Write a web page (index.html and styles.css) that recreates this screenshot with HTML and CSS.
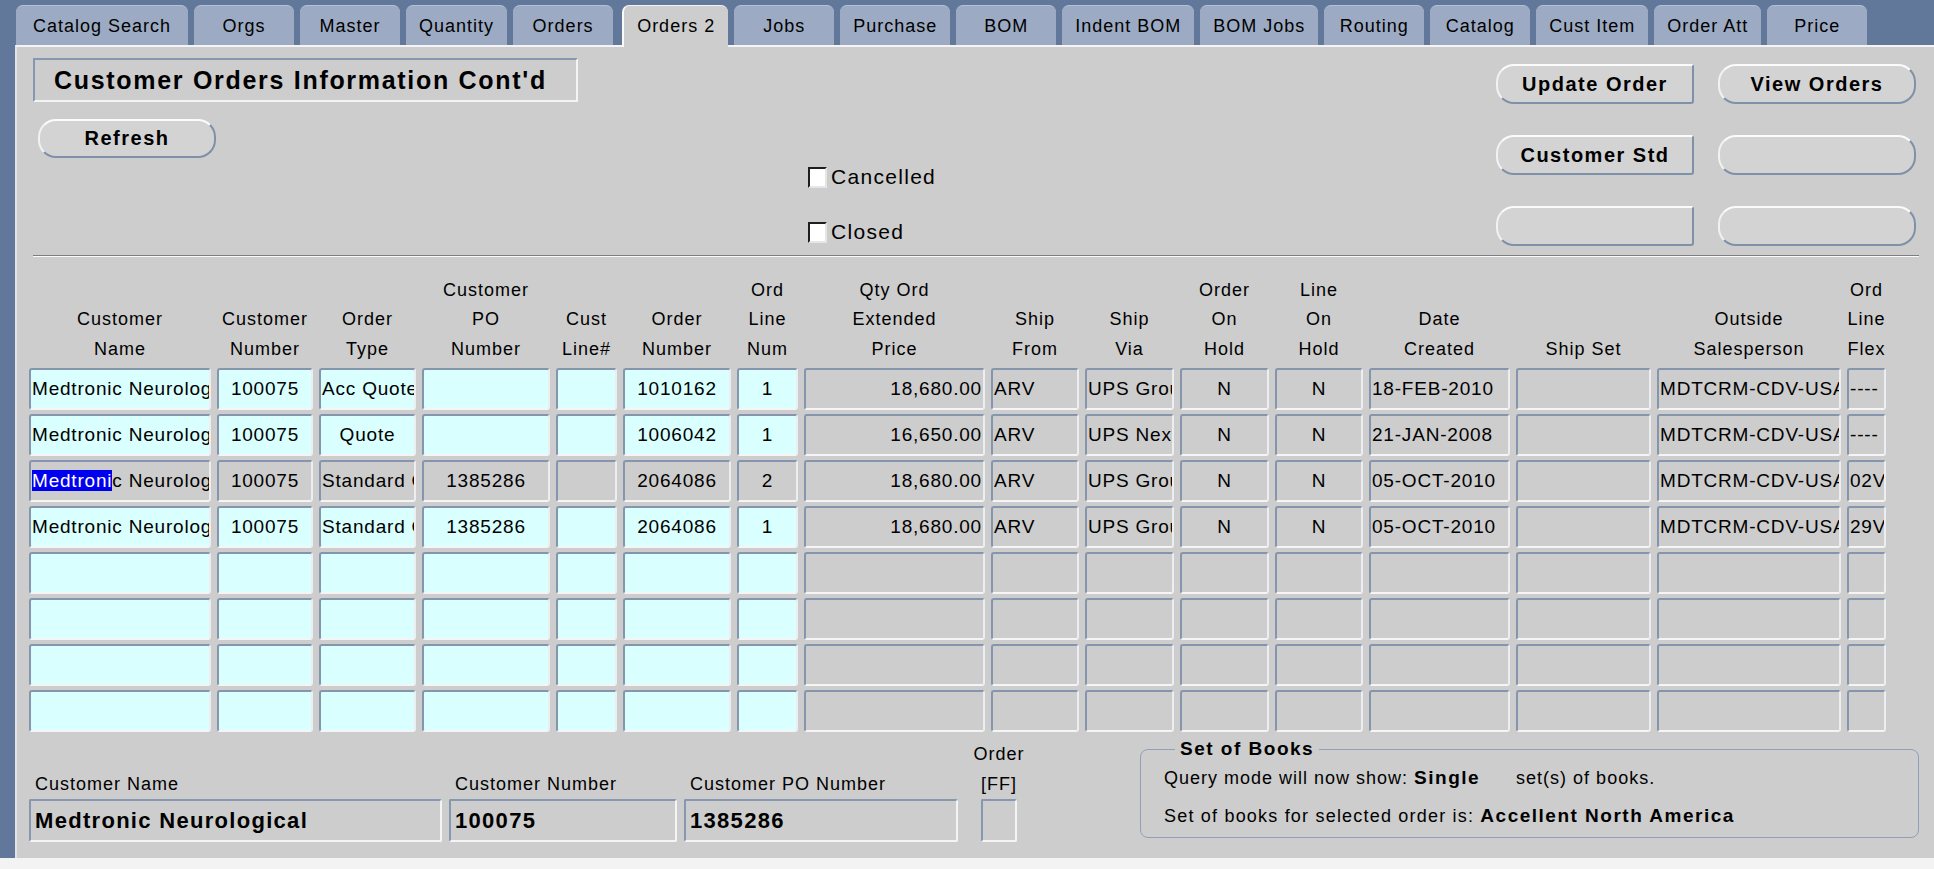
FILE: index.html
```html
<!DOCTYPE html>
<html lang="en">
  <head>
    <meta charset="UTF-8" />
    <meta name="viewport" content="width=device-width, initial-scale=1.0" />
    <title>Customer Orders Information Cont'd</title>
    <link rel="stylesheet" href="styles.css">
  </head>
  <body>
    <div class="app">
      <nav class="tabs">
        <div class="tab">Catalog Search</div>
        <div class="tab">Orgs</div>
        <div class="tab">Master</div>
        <div class="tab">Quantity</div>
        <div class="tab">Orders</div>
        <div class="tab active">Orders 2</div>
        <div class="tab">Jobs</div>
        <div class="tab">Purchase</div>
        <div class="tab">BOM</div>
        <div class="tab">Indent BOM</div>
        <div class="tab">BOM Jobs</div>
        <div class="tab">Routing</div>
        <div class="tab">Catalog</div>
        <div class="tab">Cust Item</div>
        <div class="tab">Order Att</div>
        <div class="tab">Price</div>
      </nav>

      <div class="panel">
        <div class="top">
          <div class="left">
            <div class="title">Customer Orders Information Cont'd</div>
            <button class="btn refresh">Refresh</button>
          </div>
          <div class="checks">
            <label class="check"><span class="box"></span>Cancelled</label>
            <label class="check"><span class="box"></span>Closed</label>
          </div>
          <div class="actions">
            <button class="btn sq">Update Order</button>
            <button class="btn">View Orders</button>
            <button class="btn sq">Customer Std</button>
            <button class="btn"></button>
            <button class="btn sq"></button>
            <button class="btn"></button>
          </div>
        </div>

        <div class="sep"></div>

        <div class="grid">
          <!-- header -->
          <div class="hd"><div>Customer<br>Name</div></div>
          <div class="hd"><div>Customer<br>Number</div></div>
          <div class="hd"><div>Order<br>Type</div></div>
          <div class="hd"><div>Customer<br>PO<br>Number</div></div>
          <div class="hd"><div>Cust<br>Line#</div></div>
          <div class="hd"><div>Order<br>Number</div></div>
          <div class="hd"><div>Ord<br>Line<br>Num</div></div>
          <div class="hd"><div>Qty Ord<br>Extended<br>Price</div></div>
          <div class="hd"><div>Ship<br>From</div></div>
          <div class="hd"><div>Ship<br>Via</div></div>
          <div class="hd"><div>Order<br>On<br>Hold</div></div>
          <div class="hd"><div>Line<br>On<br>Hold</div></div>
          <div class="hd"><div>Date<br>Created</div></div>
          <div class="hd"><div>Ship Set</div></div>
          <div class="hd"><div>Outside<br>Salesperson</div></div>
          <div class="hd"><div>Ord<br>Line<br>Flex</div></div>

          <!-- row 1 -->
          <div class="cell c l">Medtronic Neurological</div>
          <div class="cell c">100075</div>
          <div class="cell c l">Acc Quote</div>
          <div class="cell c"></div>
          <div class="cell c"></div>
          <div class="cell c">1010162</div>
          <div class="cell c">1</div>
          <div class="cell g r">18,680.00</div>
          <div class="cell g l">ARV</div>
          <div class="cell g l">UPS Ground</div>
          <div class="cell g">N</div>
          <div class="cell g">N</div>
          <div class="cell g l">18-FEB-2010</div>
          <div class="cell g"></div>
          <div class="cell g l">MDTCRM-CDV-USA</div>
          <div class="cell g l">----</div>

          <!-- row 2 -->
          <div class="cell c l">Medtronic Neurological</div>
          <div class="cell c">100075</div>
          <div class="cell c">Quote</div>
          <div class="cell c"></div>
          <div class="cell c"></div>
          <div class="cell c">1006042</div>
          <div class="cell c">1</div>
          <div class="cell g r">16,650.00</div>
          <div class="cell g l">ARV</div>
          <div class="cell g l">UPS Next Day</div>
          <div class="cell g">N</div>
          <div class="cell g">N</div>
          <div class="cell g l">21-JAN-2008</div>
          <div class="cell g"></div>
          <div class="cell g l">MDTCRM-CDV-USA</div>
          <div class="cell g l">----</div>

          <!-- row 3 (current record) -->
          <div class="cell g l"><span class="sel">Medtroni</span>c Neurological</div>
          <div class="cell g">100075</div>
          <div class="cell g l">Standard Order</div>
          <div class="cell g">1385286</div>
          <div class="cell g"></div>
          <div class="cell g">2064086</div>
          <div class="cell g">2</div>
          <div class="cell g r">18,680.00</div>
          <div class="cell g l">ARV</div>
          <div class="cell g l">UPS Ground</div>
          <div class="cell g">N</div>
          <div class="cell g">N</div>
          <div class="cell g l">05-OCT-2010</div>
          <div class="cell g"></div>
          <div class="cell g l">MDTCRM-CDV-USA</div>
          <div class="cell g l">02VK</div>

          <!-- row 4 -->
          <div class="cell c l">Medtronic Neurological</div>
          <div class="cell c">100075</div>
          <div class="cell c l">Standard Order</div>
          <div class="cell c">1385286</div>
          <div class="cell c"></div>
          <div class="cell c">2064086</div>
          <div class="cell c">1</div>
          <div class="cell g r">18,680.00</div>
          <div class="cell g l">ARV</div>
          <div class="cell g l">UPS Ground</div>
          <div class="cell g">N</div>
          <div class="cell g">N</div>
          <div class="cell g l">05-OCT-2010</div>
          <div class="cell g"></div>
          <div class="cell g l">MDTCRM-CDV-USA</div>
          <div class="cell g l">29VK</div>

          <!-- rows 5-8 empty -->
          <div class="cell c"></div><div class="cell c"></div><div class="cell c"></div><div class="cell c"></div>
          <div class="cell c"></div><div class="cell c"></div><div class="cell c"></div><div class="cell g"></div>
          <div class="cell g"></div><div class="cell g"></div><div class="cell g"></div><div class="cell g"></div>
          <div class="cell g"></div><div class="cell g"></div><div class="cell g"></div><div class="cell g"></div>

          <div class="cell c"></div><div class="cell c"></div><div class="cell c"></div><div class="cell c"></div>
          <div class="cell c"></div><div class="cell c"></div><div class="cell c"></div><div class="cell g"></div>
          <div class="cell g"></div><div class="cell g"></div><div class="cell g"></div><div class="cell g"></div>
          <div class="cell g"></div><div class="cell g"></div><div class="cell g"></div><div class="cell g"></div>

          <div class="cell c"></div><div class="cell c"></div><div class="cell c"></div><div class="cell c"></div>
          <div class="cell c"></div><div class="cell c"></div><div class="cell c"></div><div class="cell g"></div>
          <div class="cell g"></div><div class="cell g"></div><div class="cell g"></div><div class="cell g"></div>
          <div class="cell g"></div><div class="cell g"></div><div class="cell g"></div><div class="cell g"></div>

          <div class="cell c"></div><div class="cell c"></div><div class="cell c"></div><div class="cell c"></div>
          <div class="cell c"></div><div class="cell c"></div><div class="cell c"></div><div class="cell g"></div>
          <div class="cell g"></div><div class="cell g"></div><div class="cell g"></div><div class="cell g"></div>
          <div class="cell g"></div><div class="cell g"></div><div class="cell g"></div><div class="cell g"></div>
        </div>

        <div class="bottom">
          <div class="fld name">
            <div class="lbl">Customer Name</div>
            <div class="val">Medtronic Neurological</div>
          </div>
          <div class="fld num">
            <div class="lbl">Customer Number</div>
            <div class="val">100075</div>
          </div>
          <div class="fld po">
            <div class="lbl">Customer PO Number</div>
            <div class="val">1385286</div>
          </div>
          <div class="fld ff">
            <div class="lbl2">Order<br>[FF]</div>
            <div class="val"></div>
          </div>
          <fieldset class="books">
            <legend>Set of Books</legend>
            <p class="q">Query mode will now show: <b class="single">Single</b>set(s) of books.</p>
            <p class="s">Set of books for selected order is: <b>Accellent North America</b></p>
          </fieldset>
        </div>
      </div>
    </div>
  </body>
</html>
```

FILE: styles.css
```css
body {
  margin: 0;
  background-color: #f3f3f3;
  font-family: "Liberation Sans", Arial, sans-serif;
  font-size: 18px;
  letter-spacing: 1px;
  color: #000;
}
.app {
  height: 858px;
  background-color: #62789a;
  display: flex;
  flex-direction: column;
}

/* tabs */
.tabs {
  height: 45px;
  flex: none;
  display: flex;
  align-items: flex-end;
  gap: 6px;
  padding-left: 16px;
}
.tab {
  height: 40px;
  box-sizing: border-box;
  min-width: 100px;
  padding: 2px 13px 0;
  line-height: 37px;
  text-align: center;
  background-color: #9cabc3;
  border-top: 1px solid #b4c1d4;
  border-radius: 7px 7px 0 0;
  white-space: nowrap;
}
.tab:first-child {
  padding: 2px 17px 0;
}
.tab.active {
  position: relative;
  height: 42px;
  margin-bottom: -2px;
  margin-left: 3px;
  background-color: #cdcdcd;
  border-top: 1px solid #f2f2f2;
  border-left: 2px solid #fafafa;
  padding-bottom: 2px;
}

/* panel */
.panel {
  flex: 1;
  margin-left: 15px;
  background-color: #cdcdcd;
  border-top: 2px solid #f4f4f4;
  border-left: 2px solid #e4e4e4;
  padding: 0 15px 0 12px;
}
.top {
  display: grid;
  grid-template-columns: 779px 1fr auto;
  height: 208px;
}
.left {
  padding: 11px 0 0 4px;
}
.title {
  width: 545px;
  height: 44px;
  box-sizing: border-box;
  border: 2px solid;
  border-color: #8697b0 #f4f4f4 #f4f4f4 #8697b0;
  padding-left: 19px;
  font-weight: bold;
  font-size: 25px;
  letter-spacing: 1.7px;
  line-height: 40px;
  white-space: nowrap;
}
.btn {
  font-family: inherit;
  font-weight: bold;
  font-size: 20px;
  letter-spacing: 1.5px;
  color: #000;
  background-color: #d3d3d3;
  border: 2px solid;
  border-color: #fbfbfb #7f90a9 #7f90a9 #f2f2f2;
  border-radius: 18px;
  padding: 0;
  height: 40px;
}
.btn.sq {
  border-radius: 18px 3px 3px 18px;
}
.refresh {
  display: block;
  margin: 17px 0 0 5px;
  width: 178px;
  height: 39px;
}
.checks {
  padding-top: 115px;
  display: flex;
  flex-direction: column;
  gap: 25px;
}
.check {
  display: flex;
  align-items: center;
  gap: 4px;
  height: 30px;
  font-size: 21px;
  letter-spacing: 1.3px;
}
.box {
  width: 19px;
  height: 21px;
  box-sizing: border-box;
  background-color: #fff;
  border: 2px solid;
  border-color: #1e1e1e #e6e6e6 #e6e6e6 #1e1e1e;
}
.actions {
  display: grid;
  grid-template-columns: 198px 198px;
  grid-auto-rows: 40px;
  column-gap: 24px;
  row-gap: 31px;
  align-content: start;
  padding-top: 17px;
  margin-right: 3px;
}
.sep {
  margin-left: 4px;
  border-top: 1px solid #7e7e7e;
  border-bottom: 1px solid #fafafa;
}

/* multi-record block */
.grid {
  display: grid;
  grid-template-columns: 182px 96px 97px 128px 61px 108px 61px 181px 88px 89px 89px 88px 141px 135px 184px 39px;
  grid-template-rows: 107px;
  grid-auto-rows: 42px;
  column-gap: 6px;
  row-gap: 4px;
}
.hd {
  display: flex;
  flex-direction: column;
  justify-content: flex-end;
  align-items: center;
  text-align: center;
  line-height: 29.5px;
  white-space: nowrap;
}
.cell {
  box-sizing: border-box;
  border: 2px solid;
  border-color: #8595ae #eceef1 #f5f5f5 #8595ae;
  border-radius: 3px;
  overflow: hidden;
  white-space: nowrap;
  font-size: 19px;
  letter-spacing: 0.8px;
  line-height: 38px;
  padding: 0 2px;
  text-align: center;
}
.c {
  background-color: #d9ffff;
}
.g {
  background-color: #cdcdcd;
}
.l {
  text-align: left;
  padding-left: 1px;
}
.r {
  text-align: right;
  padding-right: 1px;
}
.sel {
  background-color: #0000f0;
  color: #fff;
}

/* bottom fields */
.bottom {
  display: flex;
  align-items: flex-end;
  margin-top: 6px;
}
.fld {
  display: flex;
  flex-direction: column;
}
.fld + .fld {
  margin-left: 7px;
}
.name {
  width: 413px;
}
.num {
  width: 228px;
}
.po {
  width: 274px;
}
.fld.ff {
  width: 36px;
  margin-left: 23px;
  align-items: center;
}
.lbl {
  line-height: 28px;
  margin-bottom: 1px;
  padding-left: 6px;
  white-space: nowrap;
}
.lbl2 {
  line-height: 30px;
  text-align: center;
  white-space: nowrap;
}
.val {
  align-self: stretch;
  height: 43px;
  box-sizing: border-box;
  border: 2px solid;
  border-color: #8697b0 #f4f4f4 #f4f4f4 #8697b0;
  border-radius: 2px;
  padding-left: 4px;
  font-weight: bold;
  font-size: 22px;
  letter-spacing: 1.3px;
  line-height: 39px;
  white-space: nowrap;
  overflow: hidden;
}
.books {
  margin: 0 0 4px auto;
  width: 779px;
  box-sizing: border-box;
  border: 1px solid #8fa0b8;
  border-radius: 8px;
  padding: 0 20px 8px 23px;
}
.books legend {
  margin-left: 11px;
  padding: 0 5px;
  font-weight: bold;
  font-size: 19px;
  letter-spacing: 1.5px;
  line-height: 22px;
}
.books p {
  margin: 0;
  line-height: 26px;
  white-space: nowrap;
}
.books b {
  font-size: 19px;
  letter-spacing: 1.5px;
}
.books .q {
  margin-top: 5px;
}
.books .s {
  margin-top: 12px;
  letter-spacing: 1.2px;
}
.single {
  margin-right: 36px;
}
```
